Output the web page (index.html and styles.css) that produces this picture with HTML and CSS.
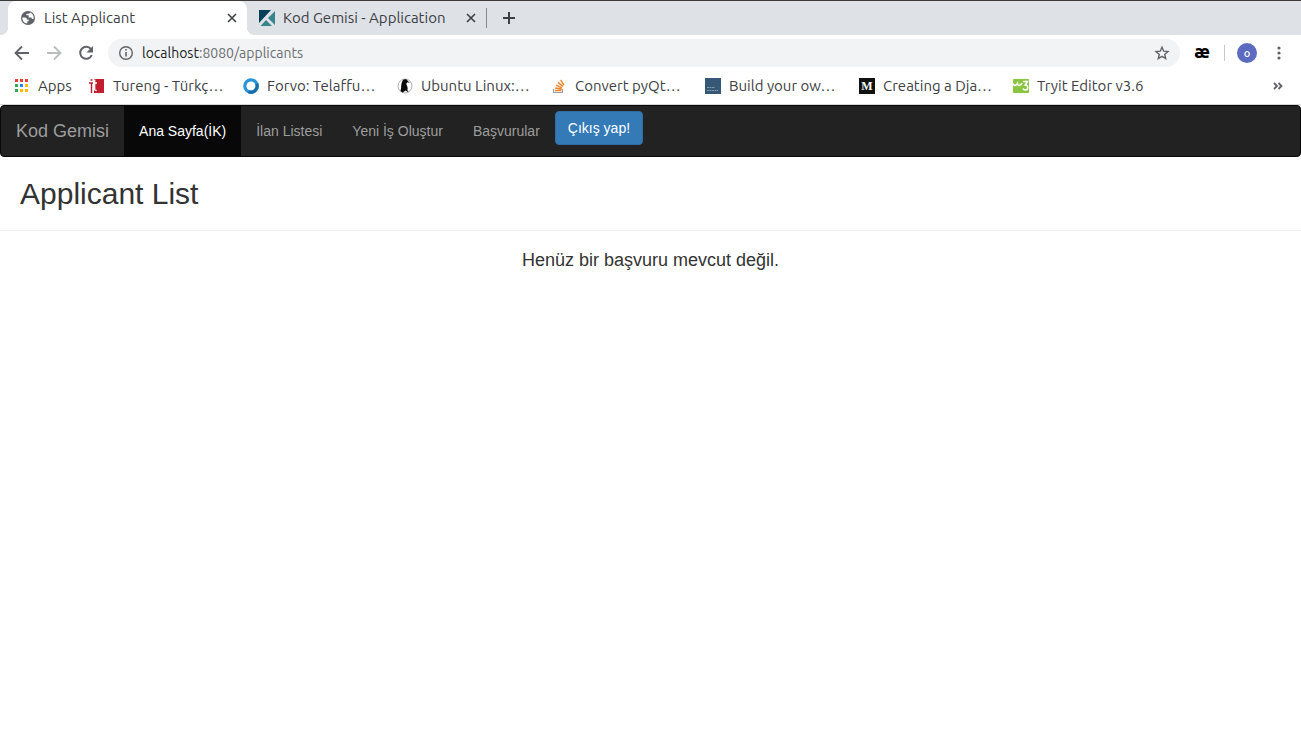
FILE: index.html
```html
<!DOCTYPE html>
<html lang="tr">
<head>
<meta charset="utf-8">
<title>List Applicant</title>
<link rel="stylesheet" href="styles.css">
</head>
<body>
<header class="browser">
  <div class="tabs">
    <div class="tab tab-active">
      <svg class="icon" viewBox="0 0 16 16"><circle cx="8" cy="8" r="7" fill="#5f6368"/><path d="M2.3 7.6h2.6c1.600 0 2 1 2 1.900h1.800v1.800H7.300v2.300C4.300 13.400 2.200 11 2.300 7.600zM10 2.600c2.200.8 3.700 2.800 3.700 5.100l-.2 1.300c-1 .1-1.900-.4-2-1.500H8.700V5.300H6.300c-.2-1.200.3-1.500 1.900-1.500 1 0 1.600-.4 1.800-1.200z" fill="#fff"/></svg>
      <span class="tab-title">List Applicant</span>
      <button class="plain" aria-label="Close tab"><svg class="icon" viewBox="0 0 16 16"><path d="M4 4l8 8M12 4l-8 8" stroke="#3c4043" stroke-width="1.600"/></svg></button>
    </div>
    <div class="tab">
      <svg class="icon" viewBox="0 0 16 16"><path d="M0 0h12L0 13z" fill="#04405a"/><path d="M16 1v14L9 8zM1.500 16L7 10l6 6z" fill="#35858a"/></svg>
      <span class="tab-title">Kod Gemisi - Application</span>
      <button class="plain" aria-label="Close tab"><svg class="icon" viewBox="0 0 16 16"><path d="M4 4l8 8M12 4l-8 8" stroke="#3c4043" stroke-width="1.600"/></svg></button>
    </div>
    <span class="tab-divider"></span>
    <button class="plain new-tab" aria-label="New tab"><svg class="icon" viewBox="0 0 16 16"><path d="M8 2v12M2 8h12" stroke="#3c4043" stroke-width="2"/></svg></button>
  </div>
  <div class="toolbar">
    <button class="plain" aria-label="Back"><svg class="icon" viewBox="0 0 16 16"><path d="M15 8H2M8 1.500L1.500 8 8 14.500" fill="none" stroke="#5f6368" stroke-width="1.800"/></svg></button>
    <button class="plain" aria-label="Forward"><svg class="icon" viewBox="0 0 16 16"><path d="M1 8h13M8 1.500L14.500 8 8 14.500" fill="none" stroke="#babcbe" stroke-width="1.800"/></svg></button>
    <button class="plain" aria-label="Reload"><svg class="icon" viewBox="0 0 16 16"><path d="M13 4.200A6 6 0 1 0 13.800 10" fill="none" stroke="#5f6368" stroke-width="2"/><path d="M15 1v6.500H8.500z" fill="#5f6368"/></svg></button>
    <div class="address">
      <svg class="icon" viewBox="0 0 16 16"><circle cx="8" cy="8" r="6.300" fill="none" stroke="#5f6368" stroke-width="1.400"/><path d="M8 7v4.500M8 4v1.600" stroke="#5f6368" stroke-width="1.600"/></svg>
      <span class="url"><span class="host">localhost</span>:8080/applicants</span>
      <button class="plain" aria-label="Bookmark"><svg class="icon" viewBox="0 0 16 16"><path d="M8 2.200l1.700 4 4.300.4-3.300 2.800 1 4.200L8 11.400l-3.700 2.200 1-4.200L2 6.600l4.300-.4z" fill="none" stroke="#5f6368" stroke-width="1.400"/></svg></button>
    </div>
    <span class="extension">æ</span>
    <span class="tool-divider"></span>
    <button class="avatar" aria-label="Profile">o</button>
    <button class="plain" aria-label="Menu"><svg class="icon" viewBox="0 0 16 16"><g fill="#5f6368"><circle cx="8" cy="3" r="1.600"/><circle cx="8" cy="8" r="1.600"/><circle cx="8" cy="13" r="1.600"/></g></svg></button>
  </div>
  <nav class="bookmarks" aria-label="Bookmarks">
    <a class="bookmark apps" href="#"><svg class="icon" viewBox="0 0 16 16"><path d="M2 1h3v3H2zM7 1h3v3H7zM12 1h3v3h-3z" fill="#ea4335"/><path d="M2 6h3v3H2zM2 11h3v3H2z" fill="#34a853"/><path d="M7 6h3v3H7z" fill="#2684fc"/><path d="M12 6h3v3h-3zM7 11h3v3H7zM12 11h3v3h-3z" fill="#fbbc04"/></svg><span>Apps</span></a>
    <a class="bookmark" href="#"><svg class="icon" viewBox="0 0 16 16"><path d="M5 1h10v14H5z" fill="#c11f30"/><path d="M0 5h4M2.500 5v10M1.500 2h2" fill="none" stroke="#c11f30" stroke-width="1.400"/><path d="M5.700 1.500v9.500q0 1.600 2 1.500M4 5h4" fill="none" stroke="#fff" stroke-width="1.300"/></svg><span>Tureng - Türkç…</span></a>
    <a class="bookmark" href="#"><svg class="icon" viewBox="0 0 16 16"><circle cx="8" cy="8" r="6.200" fill="none" stroke="#2795d8" stroke-width="3.200"/><path d="M13.700 5.600A6.200 6.200 0 0 1 5.600 13.700" fill="none" stroke="#176da9" stroke-width="3.200"/></svg><span>Forvo: Telaffu…</span></a>
    <a class="bookmark" href="#"><svg class="icon" viewBox="0 0 16 16"><circle cx="8" cy="8" r="7" fill="#fff" stroke="#999" stroke-width=".8"/><path d="M5.500 2.800C7 .8 10 .8 10.800 3l2.200 1.900-2.500-.7c-1.400.8-1.400 2-.6 3.300 1 2 .8 3.300.5 4.500l1.300 2.500-3-2-3.200 2-2-1.400C4.800 9.500 3.500 6 5.500 2.800z" fill="#080808"/></svg><span>Ubuntu Linux:…</span></a>
    <a class="bookmark" href="#"><svg class="icon" viewBox="0 0 16 16"><path d="M2.500 11v3.500h9V11" fill="none" stroke="#9c9fa3" stroke-width="1.200"/><path d="M4 12.500h6.500M4.200 10l6.400 1M5 7.200l6 2.600M7 4.400l4.900 4M9.700 1.800l3.300 5.300" stroke="#f48024" stroke-width="1.400"/></svg><span>Convert pyQt…</span></a>
    <a class="bookmark" href="#"><svg class="icon" viewBox="0 0 16 16"><path d="M0 0h16v16H0z" fill="#355876"/><path d="M2 9.500h8M2 12.500h11" stroke="#7f98ad" stroke-width="1" stroke-dasharray="2 .5"/></svg><span>Build your ow…</span></a>
    <a class="bookmark" href="#"><span class="icon medium">M</span><span>Creating a Dja…</span></a>
    <a class="bookmark" href="#"><svg class="icon" viewBox="0 0 16 16"><rect y="1" width="16" height="14" rx="1" fill="#8ac53f"/><path d="M0 5.500Q1 8 2.500 7.300T4.500 5.500Q5 8 6.800 7.200T9 5M10 3.500h4.500L12.200 7c3.500-.2 3.200 5 .2 5-1.500 0-2-.5-2.400-1.500" fill="none" stroke="#fff" stroke-width="1.500"/></svg><span>Tryit Editor v3.6</span></a>
    <button class="plain overflow" aria-label="More bookmarks"><svg class="icon" viewBox="0 0 16 16"><path d="M4 5l3 3-3 3M8.500 5l3 3-3 3" fill="none" stroke="#5f6368" stroke-width="1.800"/></svg></button>
  </nav>
</header>
<nav class="navbar">
  <a class="brand" href="#">Kod Gemisi</a>
  <a class="nav-link nav-active" href="#">Ana Sayfa(İK)</a>
  <a class="nav-link" href="#">İlan Listesi</a>
  <a class="nav-link" href="#">Yeni İş Oluştur</a>
  <a class="nav-link" href="#">Başvurular</a>
  <button class="logout">Çıkış yap!</button>
</nav>
<main>
  <h1 class="heading">Applicant List</h1>
  <p class="empty">Henüz bir başvuru mevcut değil.</p>
</main>
</body>
</html>
```
FILE: styles.css
```css
* { box-sizing: border-box; }
body {
  margin: 0;
  background: #fff;
  color: #333;
  font: 14px/20px "Liberation Sans", Arial, sans-serif;
}
a { color: inherit; text-decoration: none; }
button { font: inherit; cursor: pointer; }
.icon { display: block; flex: none; width: 16px; height: 16px; }
.plain { flex: none; padding: 0; border: 0; background: none; }

.browser {
  border-bottom: 1px solid #d5d6d8;
  color: #3c4043;
  font-family: Ubuntu, "Noto Sans", sans-serif;
}
.tabs {
  display: flex;
  align-items: center;
  height: 35px;
  padding-left: 8px;
  border-top: 1px solid #3c3936;
  background: #dee1e6;
  font-size: 15px;
}
.tab {
  display: flex;
  align-items: center;
  gap: 8px;
  width: 239px;
  height: 34px;
  padding: 0 7px 0 12px;
}
.tab-active {
  position: relative;
  background: #fff;
  border-radius: 8px 8px 0 0;
}
/* Flared bottom corners of the selected tab */
.tab-active::before,
.tab-active::after {
  content: "";
  position: absolute;
  bottom: 0;
  width: 8px;
  height: 8px;
}
.tab-active::before {
  right: 100%;
  background: radial-gradient(circle at 0 0, #dee1e6 8px, #fff 8px);
}
.tab-active::after {
  left: 100%;
  background: radial-gradient(circle at 100% 0, #dee1e6 8px, #fff 8px);
}
.tab-title { flex: 1; white-space: nowrap; }
.tab-divider { width: 1px; height: 20px; background: #85888c; }
.new-tab { margin-left: 14px; }

.toolbar {
  display: flex;
  align-items: center;
  gap: 16px;
  height: 36px;
  padding: 0 14px;
}
.address {
  display: flex;
  flex: 1;
  align-items: center;
  gap: 8px;
  height: 28px;
  margin-left: -2px;
  padding: 0 10px;
  border-radius: 14px;
  background: #f1f3f4;
}
.url { flex: 1; color: #6b6f73; }
.host { color: #202124; }
.extension {
  margin: 0 -2px;
  padding-bottom: 4px;
  color: #000;
  font-weight: 800;
  font-size: 18px;
}
.tool-divider { width: 1px; height: 16px; margin-right: -4px; background: #c6c8ca; }
.avatar {
  width: 20px;
  height: 20px;
  margin-right: -2px;
  padding: 0;
  border: 0;
  border-radius: 50%;
  background: #5c6bc0;
  color: #fff;
  font-size: 11px;
  font-weight: 500;
  line-height: 18px;
}

.bookmarks {
  display: flex;
  align-items: center;
  height: 33px;
  padding: 0 15px 3px 13px;
  font-size: 15px;
}
.bookmark {
  display: flex;
  align-items: center;
  gap: 8px;
  width: 154px;
  white-space: nowrap;
}
.apps { gap: 9px; width: 76px; }
.medium {
  background: #111;
  color: #fff;
  font: bold 12px/16px "Liberation Serif", serif;
  text-align: center;
}
.overflow { margin-left: auto; }

.navbar {
  display: flex;
  min-height: 52px;
  border: 1px solid #080808;
  border-radius: 4px;
  background: #222;
  color: #9d9d9d;
}
.brand { padding: 15px; font-size: 18px; }
.nav-link { padding: 15px; }
.nav-active { background: #080808; color: #fff; }
.logout {
  align-self: flex-start;
  margin-top: 5px;
  padding: 6px 12px;
  border: 1px solid #2e6da4;
  border-radius: 4px;
  background: #337ab7;
  color: #fff;
}
.heading {
  margin: 0;
  padding: 20px 20px 19px;
  border-bottom: 1px solid #eee;
  font-size: 30px;
  font-weight: 400;
  line-height: 34px;
}
.empty { margin: 19px 0 0; font-size: 18px; text-align: center; }
```
